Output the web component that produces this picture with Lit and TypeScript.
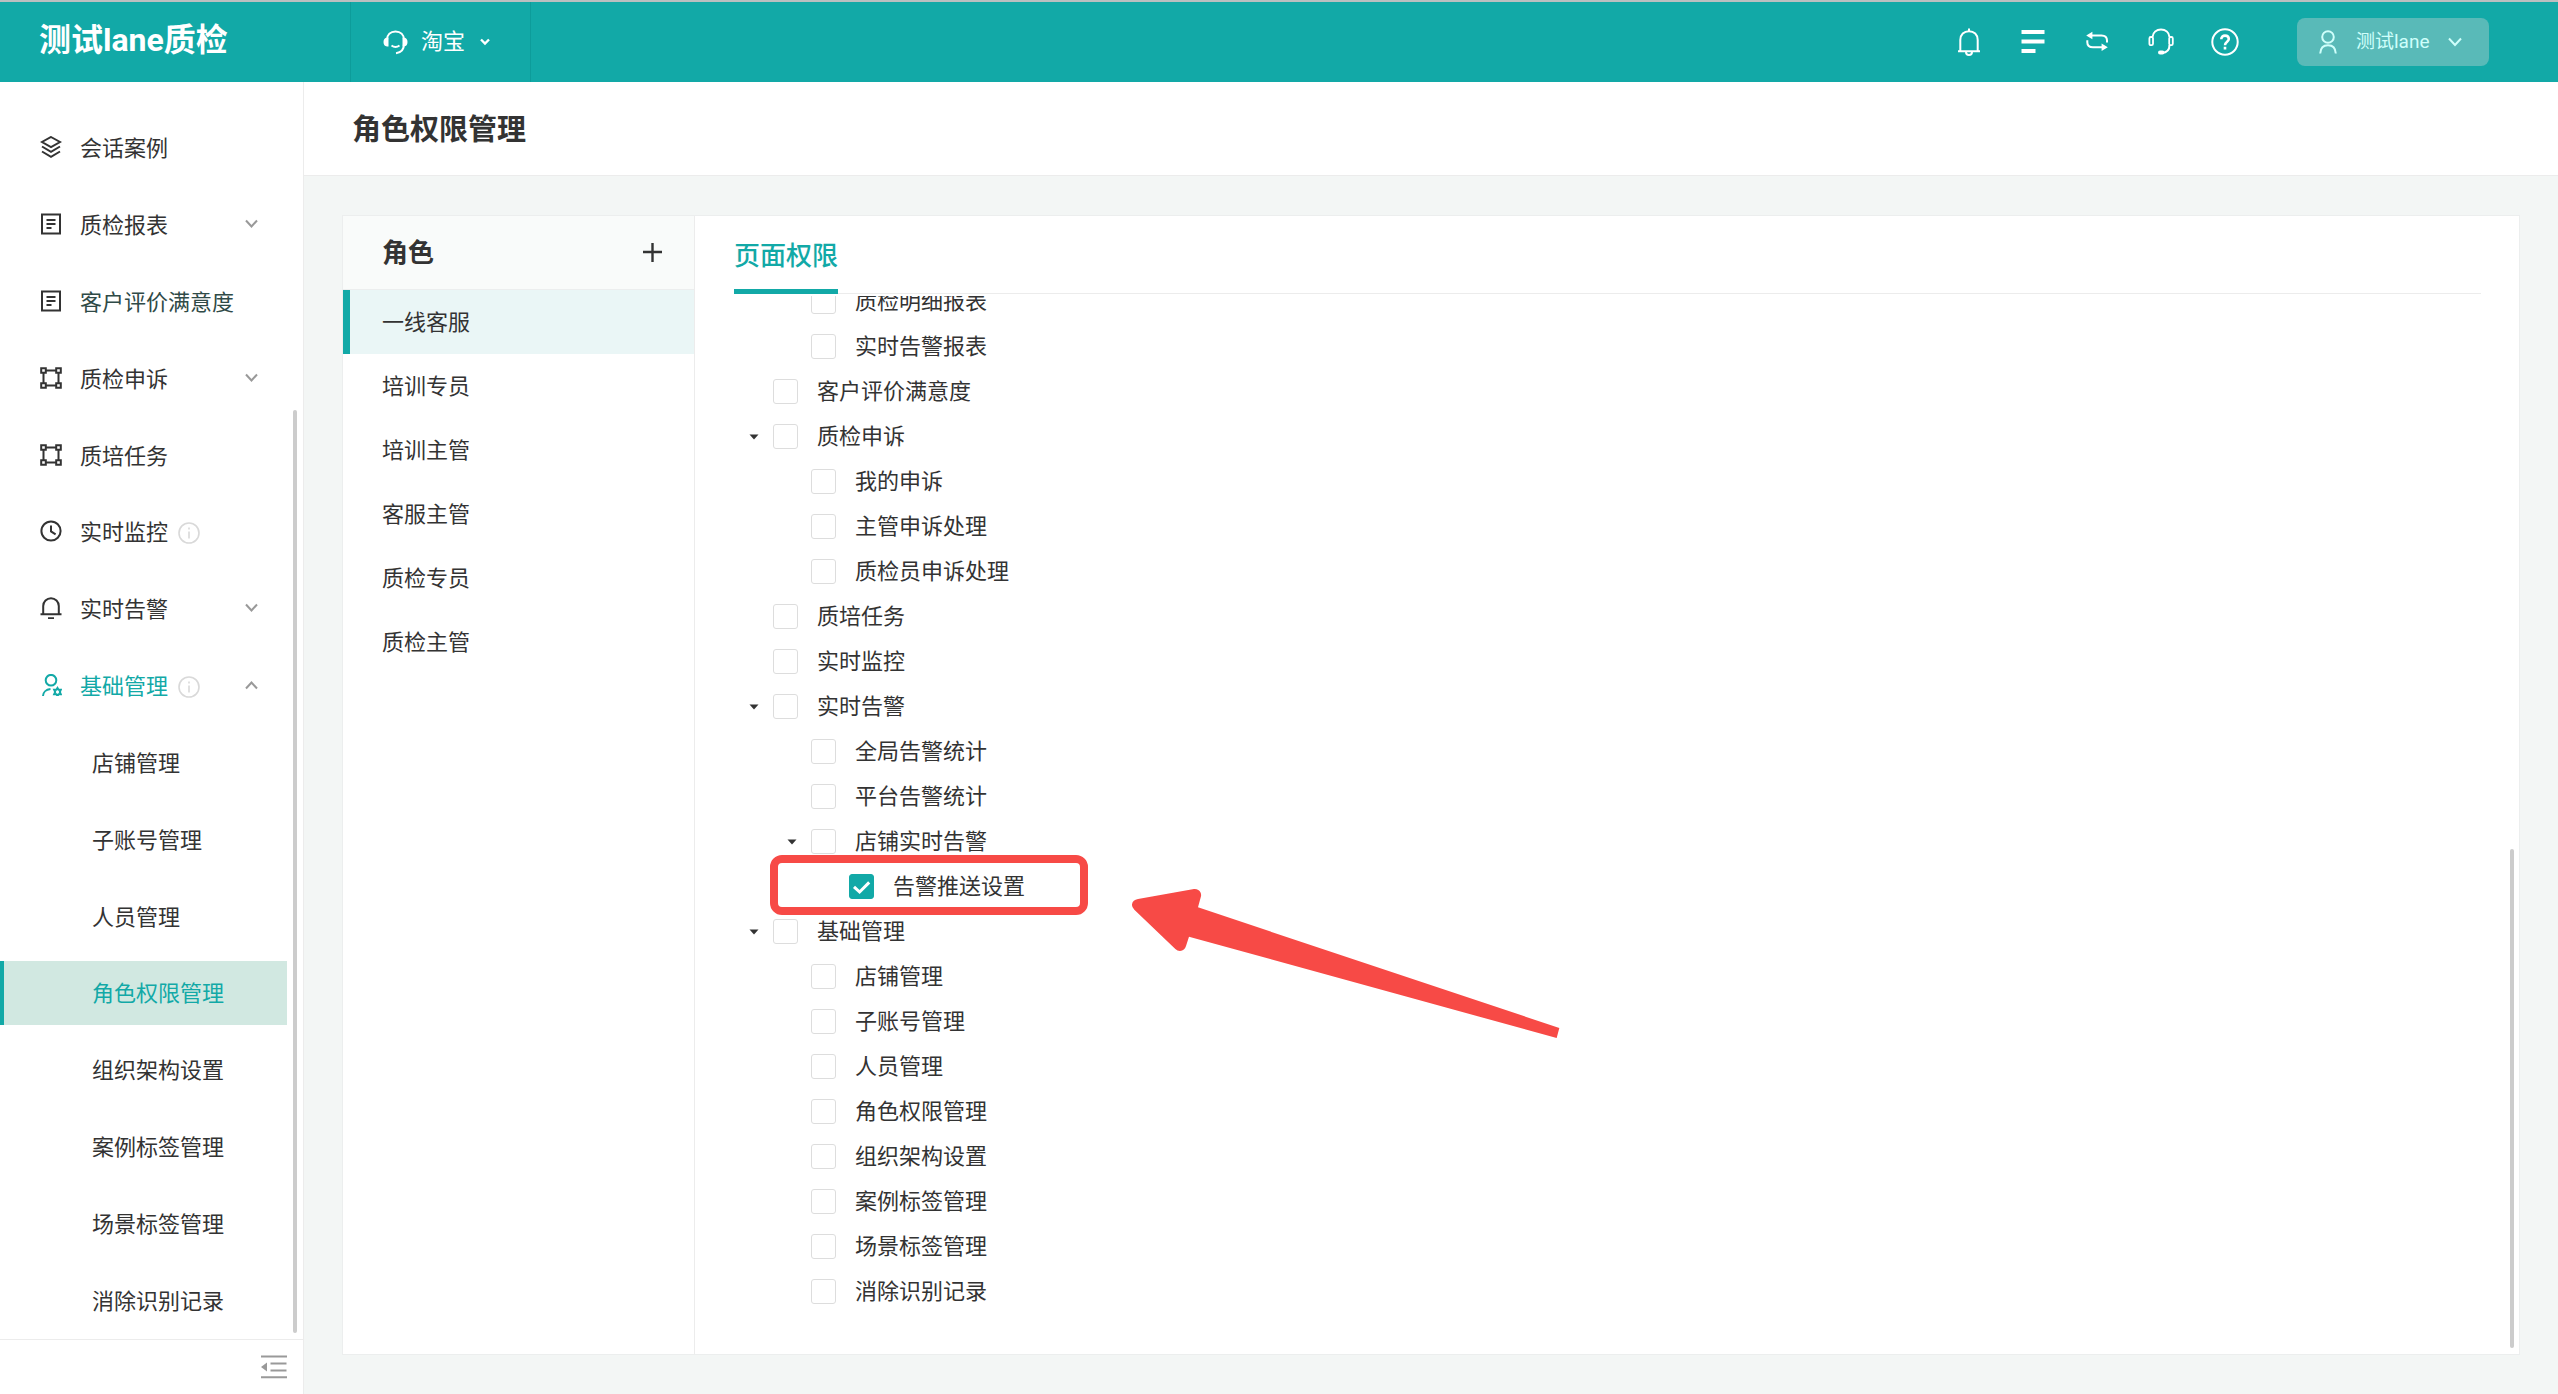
import { LitElement, html, css, svg, nothing, type TemplateResult } from "lit";
import { customElement, state } from "lit/decorators.js";
import { classMap } from "lit/directives/class-map.js";

interface NavItem {
  label: string;
  icon?: string;
  arrow?: "down" | "up";
  info?: boolean;
  open?: boolean;
  tinted?: boolean;
}

interface TreeNode {
  label?: string;
  checked?: boolean;
  marked?: boolean;
  children?: TreeNode[];
}

const NAV: NavItem[] = [
  { label: "会话案例", icon: "layers" },
  { label: "质检报表", icon: "report", arrow: "down" },
  { label: "客户评价满意度", icon: "report", tinted: true },
  { label: "质检申诉", icon: "frame", arrow: "down" },
  { label: "质培任务", icon: "frame" },
  { label: "实时监控", icon: "clock", info: true },
  { label: "实时告警", icon: "alarm", arrow: "down" },
  { label: "基础管理", icon: "admin", info: true, arrow: "up", open: true },
  { label: "店铺管理" },
  { label: "子账号管理" },
  { label: "人员管理" },
  { label: "角色权限管理" },
  { label: "组织架构设置" },
  { label: "案例标签管理" },
  { label: "场景标签管理" },
  { label: "消除识别记录" },
];

const ROLES = ["一线客服", "培训专员", "培训主管", "客服主管", "质检专员", "质检主管"];

/* A node without a label is a group whose own row is scrolled out of view. */
const TREE: TreeNode[] = [
  { children: [{ label: "质检明细报表" }, { label: "实时告警报表" }] },
  { label: "客户评价满意度" },
  {
    label: "质检申诉",
    children: [{ label: "我的申诉" }, { label: "主管申诉处理" }, { label: "质检员申诉处理" }],
  },
  { label: "质培任务" },
  { label: "实时监控" },
  {
    label: "实时告警",
    children: [
      { label: "全局告警统计" },
      { label: "平台告警统计" },
      { label: "店铺实时告警", children: [{ label: "告警推送设置", checked: true, marked: true }] },
    ],
  },
  {
    label: "基础管理",
    children: [
      { label: "店铺管理" },
      { label: "子账号管理" },
      { label: "人员管理" },
      { label: "角色权限管理" },
      { label: "组织架构设置" },
      { label: "案例标签管理" },
      { label: "场景标签管理" },
      { label: "消除识别记录" },
    ],
  },
];

/* Side navigation icons, on a 22 × 22 grid. */
const SIDE_ICONS: Record<string, TemplateResult> = {
  layers: svg`<path d="M11 1 L20 6 L11 11 L2 6 Z M2 10.5 L11 15.8 L20 10.5 M2 15.5 L11 20.8 L20 15.5" />`,
  report: svg`<path d="M2 1.5 H20 V20.5 H2 Z M6.5 7 H15.5 M6.5 11 H15.5 M6.5 15 H11.5" />`,
  frame: svg`<path d="M6 3.5 H16 M6 18.5 H16 M3.5 6 V16 M18.5 6 V16 M1.2 1.2 H5.8 V5.8 H1.2 Z M16.2 1.2 H20.8 V5.8 H16.2 Z M1.2 16.2 H5.8 V20.8 H1.2 Z M16.2 16.2 H20.8 V20.8 H16.2 Z" />`,
  clock: svg`<circle cx="11" cy="11" r="9.6" /><path d="M11 5.5 V11.4 L15.6 14.4" />`,
  alarm: svg`<path d="M0.5 17.3 H21.5 M3.2 17 V9 A7.8 7.8 0 0 1 18.8 9 V17 M8 21.2 H14" />`,
  admin: svg`<circle cx="11" cy="6.2" r="5.3" /><path d="M3 22 C3 18.5 6 15.5 10.5 15" /><path d="M17.5 14 L18.6 15.8 L20.8 15.8 L19.8 18 L20.8 20.2 L18.6 20.2 L17.5 22 L16.4 20.2 L14.2 20.2 L15.2 18 L14.2 15.8 L16.4 15.8 Z" />`,
};

@customElement("app-root")
export class AppRoot extends LitElement {
  @state() private role = 0;
  @state() private current = "角色权限管理";

  static styles = css`
    :host {
      --teal: #12a9a7;
      --ink: #333;
      --line: #ececec;
      display: flex;
      flex-direction: column;
      height: 100vh;
      overflow: hidden;
      background: #f3f6f5;
      color: var(--ink);
      font-family: Roboto, "Noto Sans CJK SC", sans-serif;
      font-size: 22px;
      line-height: 32px;
    }
    *,
    *::before,
    *::after {
      box-sizing: border-box;
    }
    button {
      margin: 0;
      padding: 0;
      border: 0;
      background: none;
      color: inherit;
      font: inherit;
      cursor: pointer;
      display: flex;
      align-items: center;
    }
    a {
      color: inherit;
      text-decoration: none;
    }
    ul {
      list-style: none;
      margin: 0;
      padding: 0;
    }
    h1,
    h2 {
      margin: 0;
    }
    svg {
      display: block;
      flex: none;
      fill: none;
      stroke: currentColor;
      stroke-width: 2;
    }
    .solid {
      fill: currentColor;
      stroke: none;
    }

    .top {
      flex: none;
      display: flex;
      align-items: stretch;
      height: 82px;
      border-top: 2px solid #bbbfc0;
      background: var(--teal);
      color: #fff;
    }
    .brand {
      display: flex;
      align-items: center;
      width: 350px;
      padding: 0 0 4px 39px;
      font-size: 32px;
      font-weight: 700;
      line-height: 40px;
    }
    .platform {
      width: 181px;
      padding-left: 32px;
      border: solid #0d9c9a;
      border-width: 0 1px;
    }
    .platform .name {
      margin: 0 15px 0 13px;
    }
    .tools {
      display: flex;
      align-items: center;
      gap: 36px;
      margin-left: auto;
      margin-right: 59px;
    }
    .account {
      height: 48px;
      width: 192px;
      margin: 0 10px 0 22px;
      padding-left: 22px;
      border-radius: 8px;
      background: #59bab8;
      color: #cffffb;
      font-size: 19px;
    }
    .account .name {
      margin: 0 18px 0 19px;
    }

    .body {
      flex: 1;
      min-height: 0;
      display: flex;
    }
    .side {
      position: relative;
      flex: none;
      width: 304px;
      display: flex;
      flex-direction: column;
      border-right: 1px solid var(--line);
      background: #fff;
    }
    .menu {
      flex: 1;
      min-height: 0;
      display: flex;
      flex-direction: column;
      padding: 28px 16px 0 0;
    }
    .menu li {
      flex: 1;
      min-height: 32px;
      display: flex;
      align-items: center;
    }
    .entry {
      flex: 1;
      display: flex;
      align-items: center;
      height: 64px;
      padding: 2px 29px 0 40px;
    }
    .entry.child {
      padding-left: 88px;
      border-left: 4px solid transparent;
    }
    .entry.current {
      border-color: var(--teal);
      background: #d1e8e1;
      color: var(--teal);
    }
    .entry.open {
      color: var(--teal);
    }
    .entry.tinted {
      color: #2f4a47;
    }
    .glyph {
      margin: 0 18px 4px 0;
      color: var(--ink);
    }
    .open .glyph {
      color: var(--teal);
    }
    .info {
      margin-left: 10px;
      color: #d9d9d9;
    }
    .caret {
      margin-left: auto;
      margin-bottom: 4px;
      color: #999;
    }
    .thumb {
      position: absolute;
      width: 4px;
      border-radius: 2px;
      background: #ccc;
    }
    .side .thumb {
      right: 6px;
      top: 25%;
      bottom: 61px;
    }
    .fold {
      flex: none;
      justify-content: flex-end;
      height: 55px;
      padding-right: 16px;
      border-top: 1px solid var(--line);
      color: #999;
    }

    .main {
      flex: 1;
      min-width: 0;
      display: flex;
      flex-direction: column;
    }
    .titlebar {
      flex: none;
      display: flex;
      align-items: center;
      height: 94px;
      padding: 2px 0 0 48px;
      border-bottom: 1px solid var(--line);
      background: #fff;
    }
    .titlebar h1 {
      font-size: 29px;
      line-height: 40px;
      font-weight: 700;
    }
    .panel {
      flex: 1;
      min-height: 0;
      display: flex;
      margin: 39px 38px;
      border: 1px solid #eceeee;
      background: #fff;
    }
    .roles {
      flex: none;
      width: 352px;
      border-right: 1px solid var(--line);
    }
    .roles header {
      display: flex;
      align-items: center;
      justify-content: space-between;
      height: 74px;
      padding: 0 32px 0 39px;
      border-bottom: 1px solid #eceeee;
      background: #f9fbfa;
    }
    .roles h2 {
      font-size: 26px;
      line-height: 32px;
      font-weight: 700;
    }
    .role {
      width: 100%;
      height: 64px;
      padding: 2px 0 0 32px;
      border-left: 7px solid transparent;
    }
    .role.active {
      border-color: var(--teal);
      background: #eaf6f6;
    }
    .rights {
      position: relative;
      flex: 1;
      min-width: 0;
      display: flex;
      flex-direction: column;
      padding: 0 38px 0 39px;
    }
    .tabs {
      flex: none;
      display: flex;
      height: 78px;
      border-bottom: 1px solid var(--line);
    }
    .tab {
      height: 78px;
      padding-top: 6px;
      border-bottom: 5px solid var(--teal);
      color: var(--teal);
      font-size: 26px;
      font-weight: 500;
    }
    .viewport {
      flex: 1;
      min-height: 0;
      display: flex;
      flex-direction: column;
      justify-content: flex-end;
      margin-top: 2px;
      padding-bottom: 40px;
      overflow: hidden;
    }
    .viewport ul ul {
      padding-left: 38px;
    }
    .row {
      position: relative;
      display: flex;
      align-items: center;
      height: 45px;
    }
    .toggle {
      width: 39px;
      height: 45px;
      justify-content: center;
      color: var(--ink);
    }
    .slot {
      width: 39px;
    }
    .pick {
      display: flex;
      align-items: center;
      gap: 19px;
    }
    .box {
      position: relative;
      width: 25px;
      height: 25px;
    }
    .box input {
      appearance: none;
      display: block;
      width: 25px;
      height: 25px;
      margin: 0;
      border: 1px solid #ddd;
      border-radius: 3px;
      background: #fff;
    }
    .box input:checked {
      border-color: var(--teal);
      background: var(--teal);
    }
    .box svg {
      position: absolute;
      inset: 0;
      color: #fff;
      stroke-width: 3;
      pointer-events: none;
    }
    .box input:not(:checked) + svg {
      display: none;
    }
    .mark,
    .pointer {
      position: absolute;
      z-index: 1;
      pointer-events: none;
    }
    .mark {
      left: -40px;
      top: -9px;
      width: 318px;
      height: 60px;
      border: 8px solid #f74a46;
      border-radius: 12px;
    }
    .pointer {
      left: 320px;
      top: 23px;
      fill: #f74a46;
      stroke: none;
    }
    .rights .thumb {
      right: 5px;
      top: 633px;
      bottom: 6px;
    }
  `;

  private navEntry(item: NavItem) {
    const classes = {
      entry: true,
      child: !item.icon,
      current: item.label === this.current,
      open: !!item.open,
      tinted: !!item.tinted,
    };
    return html`<li>
      <a
        class=${classMap(classes)}
        href="#"
        @click=${(e: Event) => {
          e.preventDefault();
          if (!item.icon) this.current = item.label;
        }}
      >
        ${item.icon
          ? html`<svg class="glyph" width="22" height="22" viewBox="0 0 22 22">${SIDE_ICONS[item.icon]}</svg>`
          : nothing}
        <span>${item.label}</span>
        ${item.info
          ? html`<svg class="info" width="22" height="22" viewBox="0 0 22 22">
              <circle cx="11" cy="11" r="10" stroke-width="1.6" />
              <path d="M11 9.5 V16.5 M11 5.5 V7.6" stroke-width="1.6" />
            </svg>`
          : nothing}
        ${item.arrow
          ? html`<svg class="caret" width="13" height="10" viewBox="0 0 13 10">
              <path d=${item.arrow === "down" ? "M1 1.5 L6.5 7.5 L12 1.5" : "M1 8.5 L6.5 2.5 L12 8.5"} />
            </svg>`
          : nothing}
      </a>
    </li>`;
  }

  private treeRow(node: TreeNode) {
    return html`<div class="row">
      ${node.children
        ? html`<button class="toggle" aria-label="收起">
            <svg class="solid" width="10" height="6" viewBox="0 0 10 6"><path d="M0.5 0.5 H9.5 L5 5.5 Z" /></svg>
          </button>`
        : html`<span class="slot"></span>`}
      <label class="pick">
        <span class="box">
          <input type="checkbox" .checked=${!!node.checked} />
          <svg width="25" height="25" viewBox="0 0 25 25"><path d="M5 12.8 L10.6 18 L20.2 8.4" /></svg>
        </span>
        <span>${node.label}</span>
      </label>
      ${node.marked
        ? html`<span class="mark"></span>
            <svg class="pointer" width="431" height="153" viewBox="150 144 1293 459">
              <path
                d="M174 180 L342 150 Q356 149 362 161 Q364 166 363 172 L354 205 L1438 567 L1430 597 L327 293 L318 321 Q314 335 300 336 Q292 336 286 330 L163 212 Q155 204 156 196 Q158 183 174 180 Z"
              />
            </svg>`
        : nothing}
    </div>`;
  }

  private treeNode(node: TreeNode): TemplateResult {
    return html`<li>
      ${node.label ? this.treeRow(node) : nothing}
      ${node.children ? html`<ul>${node.children.map((c) => this.treeNode(c))}</ul>` : nothing}
    </li>`;
  }

  render() {
    return html`
      <header class="top">
        <div class="brand">测试lane质检</div>
        <button class="platform">
          <svg width="25" height="25" viewBox="0 0 25 25">
            <path d="M4 10 C4 4.6 7.5 1.5 12.5 1.5 S21 4.6 21 10 V14 C21 19.5 18 22.6 13 23.2" />
            <path d="M8.5 15.5 Q12.5 18.6 16.5 15.5" />
            <path class="solid" d="M5.5 7.5 V16.5 H4 Q0.5 16 0.5 12 T4 7.5 Z M19.5 7.5 V16.5 H21 Q24.5 16 24.5 12 T21 7.5 Z" />
          </svg>
          <span class="name">淘宝</span>
          <svg width="10" height="8" viewBox="0 0 10 8"><path d="M1 1.5 L5 5.5 L9 1.5" stroke-width="2.4" /></svg>
        </button>
        <div class="tools">
          <button aria-label="通知">
            <svg width="28" height="28" viewBox="0 0 28 28">
              <path d="M14 0.5 V3 M3 23.3 H25 M5.3 23 V12 C5.3 6.5 9 3.2 14 3.2 S22.7 6.5 22.7 12 V23 M11 24 A3 3 0 0 0 17 24" />
            </svg>
          </button>
          <button aria-label="列表">
            <svg class="solid" width="28" height="28" viewBox="0 0 28 28">
              <path d="M2.5 2 H25.5 V6 H2.5 Z M2.5 11.5 H25.5 V15.5 H2.5 Z M2.5 21 H16.5 V25 H2.5 Z" />
            </svg>
          </button>
          <button aria-label="切换">
            <svg width="28" height="28" viewBox="0 0 28 28">
              <path d="M8 7.5 H18.5 C22 7.5 24 9.5 24 12.5 V14.5 M20 19.3 H10 C6.5 19.3 4.3 17.3 4.3 14.3 V12.3" />
              <path class="solid" d="M3.2 7.5 L9.4 3.8 V11.2 Z M24.8 19.3 L18.6 15.6 V23 Z" />
            </svg>
          </button>
          <button aria-label="客服">
            <svg width="28" height="28" viewBox="0 0 28 28">
              <path d="M5.5 9 C6 4.5 9.5 1.6 14 1.6 S22 4.5 22.5 9 M22.5 17 C22.5 22 20 24.6 15 25" />
              <rect x="2.4" y="9" width="3.6" height="8.2" rx="1.4" stroke-width="1.8" />
              <rect x="22.2" y="9" width="3.6" height="8.2" rx="1.4" stroke-width="1.8" />
              <rect class="solid" x="11" y="22.6" width="6.5" height="4" rx="2" />
            </svg>
          </button>
          <button aria-label="帮助">
            <svg width="28" height="28" viewBox="0 0 28 28">
              <circle cx="14" cy="14" r="12.7" />
              <path d="M10.3 11.3 C10.3 8.8 12 7.6 14 7.6 S17.8 8.8 17.8 11 C17.8 13.6 14 13.8 14 17.2 M14 18.8 V21.4" stroke-width="2.6" />
            </svg>
          </button>
          <button class="account">
            <svg width="18" height="24" viewBox="0 0 18 24">
              <circle cx="9" cy="7" r="5.8" /><path d="M1.2 23.5 C1.5 18 4.5 15.2 9 15.2 S16.5 18 16.8 23.5" />
            </svg>
            <span class="name">测试lane</span>
            <svg width="14" height="10" viewBox="0 0 14 10"><path d="M1 1.5 L7 8 L13 1.5" /></svg>
          </button>
        </div>
      </header>
      <div class="body">
        <nav class="side">
          <ul class="menu">
            ${NAV.map((item) => this.navEntry(item))}
          </ul>
          <div class="thumb"></div>
          <button class="fold" aria-label="收起菜单">
            <svg width="26" height="24" viewBox="0 0 26 24">
              <path d="M0 1.5 H26 M9.5 8.5 H25.5 M9.5 15.5 H25.5 M0 22.3 H26" />
              <path class="solid" d="M0 12 L6 7.5 V16.5 Z" />
            </svg>
          </button>
        </nav>
        <main class="main">
          <div class="titlebar"><h1>角色权限管理</h1></div>
          <div class="panel">
            <section class="roles">
              <header>
                <h2>角色</h2>
                <button aria-label="新增角色">
                  <svg width="19" height="19" viewBox="0 0 19 19"><path d="M0 9 H19 M9.5 0 V19" stroke-width="2.4" /></svg>
                </button>
              </header>
              ${ROLES.map(
                (name, i) => html`<button
                  class=${classMap({ role: true, active: i === this.role })}
                  @click=${() => (this.role = i)}
                >
                  ${name}
                </button>`
              )}
            </section>
            <section class="rights">
              <div class="tabs"><button class="tab">页面权限</button></div>
              <div class="viewport">
                <ul>
                  ${TREE.map((n) => this.treeNode(n))}
                </ul>
              </div>
              <div class="thumb"></div>
            </section>
          </div>
        </main>
      </div>
    `;
  }
}
